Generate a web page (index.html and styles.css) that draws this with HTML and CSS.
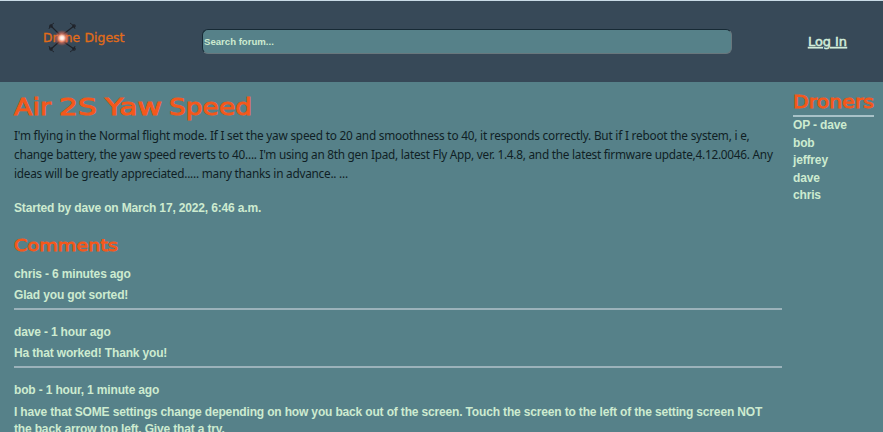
FILE: index.html
```
<!DOCTYPE html>
<html lang="en">
<head>
<meta charset="utf-8">
<title>Air 2S Yaw Speed</title>
<link rel="stylesheet" href="styles.css">
</head>
<body>
<header class="header">
  <a class="logo" aria-label="Drone Digest">
    <svg width="90" height="38" viewBox="0 0 90 38">
      <defs>
        <radialGradient id="glow">
          <stop offset="0" stop-color="#fff"/>
          <stop offset=".25" stop-color="#ffe0d2"/>
          <stop offset=".55" stop-color="#ef7b62" stop-opacity=".7"/>
          <stop offset="1" stop-color="#e8553c" stop-opacity="0"/>
        </radialGradient>
      </defs>
      <g fill="none" stroke="#1f2229" stroke-width="1.2">
        <path d="M10 7 20 17 33 7M10 30 20 21 33 30"/>
        <path d="M8 10 9 7 13 4M29 4 33 7 34 10M8 27 9 30 13 33M29 33 33 30 34 27" stroke-width=".9"/>
        <circle cx="10" cy="7" r="1.2"/><circle cx="33" cy="7" r="1.2"/>
        <circle cx="10" cy="30" r="1.2"/><circle cx="33" cy="30" r="1.2"/>
      </g>
      <text class="logo-text"><tspan x="2" y="22.500" textLength="37" lengthAdjust="spacingAndGlyphs">Drone</tspan> <tspan x="43.500" y="22.500" textLength="40" lengthAdjust="spacingAndGlyphs">Digest</tspan></text>
      <circle cx="21" cy="19" r="8" fill="url(#glow)"/>
    </svg>
  </a>
  <input class="search" type="text" placeholder="Search forum...">
  <a class="login"><svg width="40" height="18"><text x="0" y="13" textLength="39" lengthAdjust="spacingAndGlyphs">Log In</text></svg></a>
</header>
<main class="page">
  <section class="thread">
    <h1 class="title"><svg width="260" height="32">
      <text x="0" y="24" textLength="37" lengthAdjust="spacingAndGlyphs">Air</text>
      <text x="45" y="24" textLength="38" lengthAdjust="spacingAndGlyphs">2S</text>
      <text x="91" y="24" textLength="57" lengthAdjust="spacingAndGlyphs">Yaw</text>
      <text x="155" y="24" textLength="83" lengthAdjust="spacingAndGlyphs">Speed</text>
    </svg></h1>
    <p class="post">
      <span class="line one">I'm flying in the Normal flight mode. If I set the yaw speed to 20 and smoothness to 40, it responds correctly. But if I reboot the system, i e,</span>
      <span class="line two">change battery, the yaw speed reverts to 40.... I'm using an 8th gen Ipad, latest Fly App, ver. 1.4.8, and the latest firmware update,4.12.0046. Any</span>
      <span class="line three">ideas will be greatly appreciated..... many thanks in advance.. ...</span>
    </p>
    <p class="started">Started by dave on March 17, 2022, 6:46 a.m.</p>
    <h2 class="subtitle"><svg width="120" height="24"><text x="0" y="15" textLength="104" lengthAdjust="spacingAndGlyphs">Comments</text></svg></h2>
    <article class="comment">
      <p>chris - 6 minutes ago</p>
      <p class="text">Glad you got sorted!</p>
    </article>
    <article class="comment">
      <p>dave - 1 hour ago</p>
      <p class="text">Ha that worked! Thank you!</p>
    </article>
    <article class="comment last">
      <p>bob - 1 hour, 1 minute ago</p>
      <p class="text">I have that SOME settings change depending on how you back out of the screen. Touch the screen to the left of the setting screen NOT<br>the back arrow top left. Give that a try.</p>
    </article>
  </section>
  <aside class="droners">
    <h2 class="aside-title"><svg width="82" height="23"><text x="0" y="16" textLength="81" lengthAdjust="spacingAndGlyphs">Droners</text></svg></h2>
    <ul class="names">
      <li>OP - dave</li>
      <li>bob</li>
      <li>jeffrey</li>
      <li>dave</li>
      <li>chris</li>
    </ul>
  </aside>
</main>
</body>
</html>
```
FILE: styles.css
```
* { box-sizing: border-box; }
body {
  margin: 0;
  height: 432px;
  overflow: hidden;
  background: #568189;
  color: #cdebd0;
  font: bold 12px/17.5px "Liberation Sans", Arial, sans-serif;
  letter-spacing: -.16px;
}
p, h1, h2, ul { margin: 0; padding: 0; }
svg { display: block; overflow: visible; letter-spacing: 0; }
.header {
  height: 82px;
  display: flex;
  align-items: center;
  background: #374958;
  border-top: 1px solid #c9dbe6;
}
.logo { margin-left: 41px; width: 161px; padding-bottom: 8px; }
.logo-text { font: 11.5px "DejaVu Sans", sans-serif; fill: #e26c18; stroke: #e26c18; stroke-width: .3px; }
.search {
  width: 530px;
  height: 25px;
  padding: 0 1px;
  border: 1px solid;
  border-color: #172a35 #68777d #68777d #172a35;
  border-radius: 6px;
  background: #568189;
  font: bold 9.6px "Liberation Sans", Arial, sans-serif;
}
.search::placeholder { color: #cdebd0; opacity: 1; }
.login {
  margin-left: 76px;
  font: 12px "DejaVu Sans", sans-serif;
}
.login text { fill: #d2edda; stroke: #d2edda; stroke-width: .5px; text-decoration: underline; }
.page { display: flex; }
.thread { width: 768px; margin-left: 14px; flex: none; }
.title, .subtitle, .aside-title { font-family: "DejaVu Sans", sans-serif; font-weight: normal; }
.title text, .subtitle text, .aside-title text { fill: #f4581b; stroke: #f4581b; stroke-width: .9px; }
.title { height: 43px; padding-top: 9px; font-size: 23px; }
.post { color: #101f25; font: 11.8px/19px "Noto Sans", "Open Sans", sans-serif; height: 75px; padding-top: 1px; }
.line { display: block; white-space: nowrap; }
.one { letter-spacing: -.21px; }
.two { letter-spacing: -.25px; }
.three { letter-spacing: -.24px; }
.started { height: 36px; }
.subtitle { height: 30px; font-size: 16.5px; }
.comment { height: 58px; }
.comment p { white-space: nowrap; }
.comment .text { padding: 3px 0 4px; border-bottom: 2px solid #9bb2ba; }
.comment.last .text { padding-top: 4px; line-height: 17px; }
.droners { margin-left: 11px; width: 81px; padding-top: 10px; }
.aside-title { height: 25px; border-bottom: 2px solid #a8c2c8; font-size: 17px; }
.names { list-style: none; }
```
